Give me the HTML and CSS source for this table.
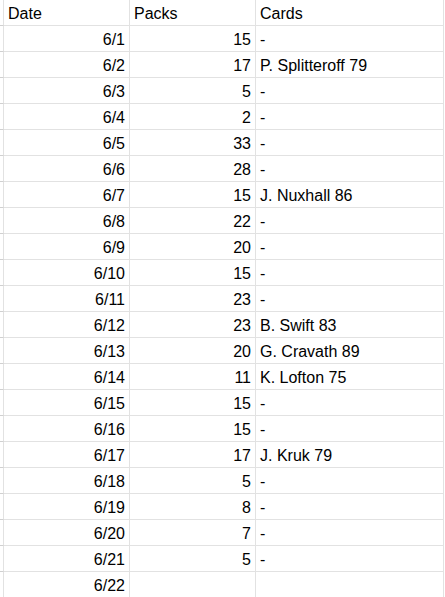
FILE: index.html
```html
<!DOCTYPE html>
<html>
<head>
<meta charset="utf-8">
<link rel="stylesheet" href="styles.css">
</head>
<body>
<div class="sheet">
  <div class="row"><div class="stub"></div><div class="cell">Date</div><div class="cell">Packs</div><div class="cell">Cards</div></div>
  <div class="row"><div class="stub"></div><div class="cell num">6/1</div><div class="cell num">15</div><div class="cell">-</div></div>
  <div class="row"><div class="stub"></div><div class="cell num">6/2</div><div class="cell num">17</div><div class="cell">P. Splitteroff 79</div></div>
  <div class="row"><div class="stub"></div><div class="cell num">6/3</div><div class="cell num">5</div><div class="cell">-</div></div>
  <div class="row"><div class="stub"></div><div class="cell num">6/4</div><div class="cell num">2</div><div class="cell">-</div></div>
  <div class="row"><div class="stub"></div><div class="cell num">6/5</div><div class="cell num">33</div><div class="cell">-</div></div>
  <div class="row"><div class="stub"></div><div class="cell num">6/6</div><div class="cell num">28</div><div class="cell">-</div></div>
  <div class="row"><div class="stub"></div><div class="cell num">6/7</div><div class="cell num">15</div><div class="cell">J. Nuxhall 86</div></div>
  <div class="row"><div class="stub"></div><div class="cell num">6/8</div><div class="cell num">22</div><div class="cell">-</div></div>
  <div class="row"><div class="stub"></div><div class="cell num">6/9</div><div class="cell num">20</div><div class="cell">-</div></div>
  <div class="row"><div class="stub"></div><div class="cell num">6/10</div><div class="cell num">15</div><div class="cell">-</div></div>
  <div class="row"><div class="stub"></div><div class="cell num">6/11</div><div class="cell num">23</div><div class="cell">-</div></div>
  <div class="row"><div class="stub"></div><div class="cell num">6/12</div><div class="cell num">23</div><div class="cell">B. Swift 83</div></div>
  <div class="row"><div class="stub"></div><div class="cell num">6/13</div><div class="cell num">20</div><div class="cell">G. Cravath 89</div></div>
  <div class="row"><div class="stub"></div><div class="cell num">6/14</div><div class="cell num">11</div><div class="cell">K. Lofton 75</div></div>
  <div class="row"><div class="stub"></div><div class="cell num">6/15</div><div class="cell num">15</div><div class="cell">-</div></div>
  <div class="row"><div class="stub"></div><div class="cell num">6/16</div><div class="cell num">15</div><div class="cell">-</div></div>
  <div class="row"><div class="stub"></div><div class="cell num">6/17</div><div class="cell num">17</div><div class="cell">J. Kruk 79</div></div>
  <div class="row"><div class="stub"></div><div class="cell num">6/18</div><div class="cell num">5</div><div class="cell">-</div></div>
  <div class="row"><div class="stub"></div><div class="cell num">6/19</div><div class="cell num">8</div><div class="cell">-</div></div>
  <div class="row"><div class="stub"></div><div class="cell num">6/20</div><div class="cell num">7</div><div class="cell">-</div></div>
  <div class="row"><div class="stub"></div><div class="cell num">6/21</div><div class="cell num">5</div><div class="cell">-</div></div>
  <div class="row"><div class="stub"></div><div class="cell num">6/22</div><div class="cell num"></div><div class="cell"></div></div>
</div>
</body>
</html>
```
FILE: styles.css
```css
html, body {
  margin: 0;
  padding: 0;
  background: #ffffff;
}
.sheet {
  font-family: "Liberation Sans", Arial, sans-serif;
  font-size: 16px;
  color: #000000;
  width: 444px;
}
.row {
  display: grid;
  grid-template-columns: 4px 126px 126px 188px;
  height: 26px;
}
.stub {
  box-sizing: border-box;
  border-right: 1px solid #e2e2e2;
  border-bottom: 1px solid #d0d0d0;
}
.cell {
  box-sizing: border-box;
  border-right: 1px solid #e2e2e2;
  border-bottom: 1px solid #e2e2e2;
  display: flex;
  align-items: center;
  padding: 2px 3px 0 4px;
  white-space: nowrap;
  overflow: hidden;
}
.num {
  justify-content: flex-end;
  padding-right: 4px;
}
```
